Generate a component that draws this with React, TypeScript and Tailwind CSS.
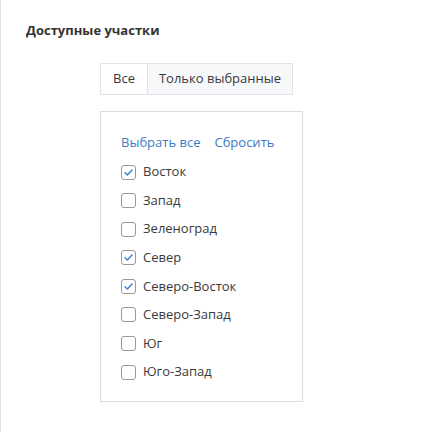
import React, { useState } from 'react';

const DISTRICTS = [
  'Восток',
  'Запад',
  'Зеленоград',
  'Север',
  'Северо-Восток',
  'Северо-Запад',
  'Юг',
  'Юго-Запад',
];

function CheckBox({ checked }: { checked: boolean }) {
  return (
    <span className="w-[15px] h-[15px] rounded-[3px] border border-[#999] bg-white flex items-center justify-center shrink-0">
      {checked && (
        <svg width="11" height="11" viewBox="0 0 11 11" fill="none">
          <path d="M2 5.8 L4.4 8 L9 3" stroke="#3b82d6" strokeWidth="1.5" strokeLinecap="round" strokeLinejoin="round" />
        </svg>
      )}
    </span>
  );
}

export default function App() {
  const [tab, setTab] = useState<'all' | 'selected'>('all');
  const [selected, setSelected] = useState<string[]>(['Восток', 'Север', 'Северо-Восток']);

  const toggle = (name: string) =>
    setSelected((s) => (s.includes(name) ? s.filter((x) => x !== name) : [...s, name]));

  const list = tab === 'all' ? DISTRICTS : DISTRICTS.filter((d) => selected.includes(d));

  return (
    <div className="w-[439px] h-[432px] bg-white border-l border-[#e3e3e3] text-[#3a3a3a] font-['Open_Sans',sans-serif] text-[13px]">
      <div className="pl-[25px] pt-[20px]">
        <h3 className="font-bold text-[13px] leading-[20px] text-[#333]">Доступные участки</h3>
      </div>

      <div className="pl-[99px] pt-[23px]">
        <div className="inline-flex border border-[#e1e4ea] h-[32px]">
          <button
            onClick={() => setTab('all')}
            className={`px-[12px] ${tab === 'all' ? 'bg-white' : 'bg-[#f7f8fa]'} border-r border-[#e1e4ea]`}
          >
            Все
          </button>
          <button
            onClick={() => setTab('selected')}
            className={`px-[11px] ${tab === 'selected' ? 'bg-white' : 'bg-[#f7f8fa]'}`}
          >
            Только выбранные
          </button>
        </div>

        <div className="mt-[16px] w-[203px] h-[291px] border border-[#dddddd] px-[20px] pt-[20px]">
          <div className="flex gap-[14px] text-[#3a7bc8] leading-[20px]">
            <button onClick={() => setSelected([...DISTRICTS])}>Выбрать все</button>
            <button onClick={() => setSelected([])}>Сбросить</button>
          </div>
          <ul className="mt-[10px] flex flex-col gap-[8.6px]">
            {list.map((d) => (
              <li key={d} className="flex items-center gap-[7px] h-[20px] cursor-pointer" onClick={() => toggle(d)}>
                <CheckBox checked={selected.includes(d)} />
                <span>{d}</span>
              </li>
            ))}
          </ul>
        </div>
      </div>
    </div>
  );
}
